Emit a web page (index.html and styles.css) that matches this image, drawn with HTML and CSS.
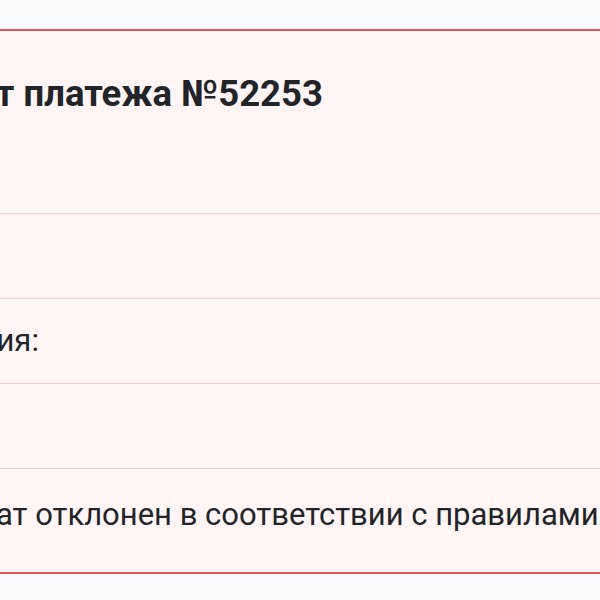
FILE: index.html
```html
<!DOCTYPE html>
<html lang="ru">
<head>
  <meta charset="UTF-8">
  <meta name="viewport" content="width=device-width, initial-scale=1.0">
  <title>Результат платежа</title>
  <link rel="stylesheet" href="styles.css">
</head>
<body>
<div class="page">
  <div class="result-card">
    <div class="result-head">
      <h1 class="result-title">Результат платежа №52253</h1>
    </div>
    <div class="result-row"></div>
    <div class="result-row">Категория:</div>
    <div class="result-row"></div>
    <div class="result-row result-last">Результат отклонен в соответствии с правилами</div>
  </div>
</div>
</body>
</html>
```

FILE: styles.css
```css
* {
  box-sizing: border-box;
}

body {
  margin: 0;
  background: #f8f9fa;
  font-family: Roboto, "Liberation Sans", sans-serif;
  color: #212529;
  overflow: hidden;
}

.page {
  padding-top: 29px;
  /* page is scrolled to the right, card starts off screen */
  margin-left: -170px;
  width: 1400px;
}

.result-card {
  background: #fff5f5;
  border-top: 2px solid #e05561;
  border-bottom: 2px solid #e05561;
}

.result-head {
  height: 182px;
  padding: 41px 0 0 10px;
}

.result-title {
  margin: 0;
  font-size: 36.5px;
  font-weight: 700;
  line-height: 1.2;
  white-space: nowrap;
}

.result-row {
  height: 85px;
  padding: 22px 0 0 52px;
  border-top: 1px solid #f6c9cd;
  font-size: 31px;
  line-height: 39px;
  white-space: nowrap;
}

.result-last {
  height: 104px;
  padding-top: 26px;
}
```
